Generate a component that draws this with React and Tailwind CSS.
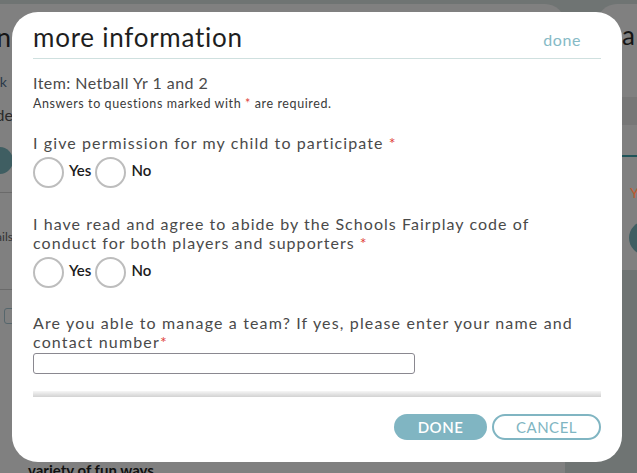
import React from 'react';

// clips a piece of text so only its end shows at the right edge of the box
function ClipEnd({ className = '', children }) {
  return (
    <div className={`flex justify-end overflow-hidden whitespace-nowrap ${className}`}>
      {children}
    </div>
  );
}

function Radio({ label }) {
  return (
    <label className="flex items-center gap-[5px]">
      <span className="h-[31px] w-[31px] rounded-full border-2 border-[#bdbdbd] bg-white" />
      <span className="-mt-[4px] text-[15px] font-semibold text-[#1b1b1b]">{label}</span>
    </label>
  );
}

function YesNo() {
  return (
    <div className="mt-[5px] flex items-center gap-[4px]">
      <Radio label="Yes" />
      <Radio label="No" />
    </div>
  );
}

function Req() {
  return <span className="text-[#e0413a]">*</span>;
}

export default function App() {
  return (
    <div className="relative h-[473px] w-[637px] overflow-hidden bg-[#6f7473] font-['Lato',sans-serif]">
      {/* dimmed page behind the dialog */}
      <div className="flex h-full gap-[32px] pt-[4px]">
        <div className="w-[565px] shrink-0 rounded-tr-[20px] bg-[#808080] pt-px">
          <ClipEnd className="mt-[17px] w-[11px] text-[26px] leading-[30px] text-[#151515]">Registration</ClipEnd>
          <ClipEnd className="mt-[21px] w-[7px] text-[14px] leading-[18px] text-[#2b3a4a]">back</ClipEnd>
          <ClipEnd className="mt-[14px] w-[13px] text-[16px] leading-[20px] text-[#2a2a2a]">Grade</ClipEnd>
          <div className="-ml-[14px] mt-[22px] h-[27px] w-[27px] rounded-full bg-[#3f5e62]" />
          <div className="mt-[18px] h-px w-full bg-[#6a6a6a]" />
          <ClipEnd className="mt-[36px] w-[13px] text-[12px] leading-[16px] text-[#333]">Details</ClipEnd>
          <div className="mt-[44px] h-px w-full bg-[#6a6a6a]" />
          <div className="ml-[4px] mt-[18px] h-[16px] w-[14px] rounded-[3px] border border-[#56666c]" />
          <div className="ml-[28px] mt-[116px] text-[15px] font-bold leading-[20px] text-[#111]">
            Introducing netball skills through play in a
          </div>
          <div className="ml-[28px] text-[15px] font-bold leading-[20px] text-[#111]">variety of fun ways.</div>
        </div>
        <div className="flex h-[266px] w-[80px] shrink-0 flex-col rounded-tl-[20px] bg-[#808080]">
          <div className="ml-[25px] mt-[16px] text-[26px] leading-[30px] text-[#151515]">a</div>
          <div className="mt-[47px] h-[28px] bg-[#777777]" />
          <div className="mt-[30px] h-[2px] bg-[#1f5459]" />
          <div className="ml-[33px] mt-[28px] text-[14px] leading-[16px] text-[#c0582e]">Y</div>
          <div className="ml-[32px] mt-[20px] h-[34px] w-[34px] rounded-full bg-[#3f5e62]" />
        </div>
      </div>

      {/* dialog */}
      <div className="absolute left-[12px] top-[12px] flex h-[450px] w-[610px] flex-col rounded-[26px] bg-white px-[21px] pt-[10px]">
        <div className="flex items-start justify-between border-b border-[#cfe0df] pb-[6px]">
          <h1 className="text-[26px] leading-[30px] tracking-[0.75px] text-[#1e1e1e]">more information</h1>
          <button className="mr-[20px] mt-[8px] text-[16px] leading-[20px] tracking-[0.6px] text-[#86bac6]">done</button>
        </div>

        <div className="mt-[14px] text-[16px] leading-[19px] tracking-[0.45px] text-[#4a4a4a]">
          Item: Netball Yr 1 and 2
        </div>
        <div className="mt-[4px] text-[12.5px] leading-[15px] tracking-[0.6px] text-[#3a3a3a]">
          Answers to questions marked with <Req /> are required.
        </div>

        <div className="mt-[22px] text-[16px] leading-[19px] tracking-[1.1px] text-[#4a4a4a]">
          I give permission for my child to participate <Req />
        </div>
        <YesNo />

        <div className="mt-[26px] text-[16px] leading-[19px] tracking-[1.05px] text-[#4a4a4a]">
          I have read and agree to abide by the Schools Fairplay code of
          <br />
          conduct for both players and supporters <Req />
        </div>
        <YesNo />

        <div className="mt-[25px] text-[16px] leading-[19px] tracking-[1.15px] text-[#4a4a4a]">
          Are you able to manage a team? If yes, please enter your name and
          <br />
          contact number<Req />
        </div>
        <input className="mt-[2px] h-[21px] w-[382px] rounded-[3px] border border-[#8a8890] px-1 text-[14px] outline-none" />

        <div className="mt-[17px] h-[6px] bg-gradient-to-b from-[#f6f6f6] to-[#d2d2d2]" />

        <div className="mt-[17px] flex justify-end gap-[5px]">
          <button className="h-[26px] w-[93px] rounded-full bg-[#80b5c2] text-[15px] font-semibold tracking-[0.5px] text-white">
            DONE
          </button>
          <button className="h-[26px] w-[109px] rounded-full border-2 border-[#80b5c2] text-[15px] tracking-[0.5px] text-[#80b5c2]">
            CANCEL
          </button>
        </div>
      </div>
    </div>
  );
}
